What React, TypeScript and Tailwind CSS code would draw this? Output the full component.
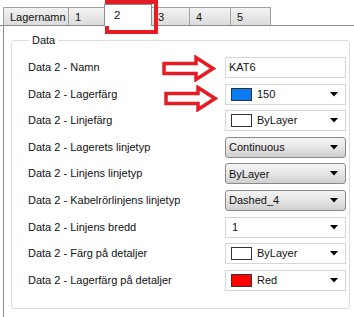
import React from "react";

const font = { fontFamily: '"Liberation Sans", Arial, sans-serif' };

function Caret() {
  return (
    <svg width="8" height="5" viewBox="0 0 8 5" className="shrink-0">
      <polygon points="0,0 8,0 4,4.5" fill="#000" />
    </svg>
  );
}

function Swatch({ color }: { color: string }) {
  return <span className="w-[21px] h-[13px] border border-[#333] shrink-0" style={{ background: color }} />;
}

function WhiteCombo({ swatch, text }: { swatch?: string; text: string }) {
  return (
    <div className="w-[121px] h-[21px] border border-[#d4d6da] bg-white flex items-center pl-[5px] pr-[7px]">
      {swatch && <Swatch color={swatch} />}
      <span className={`flex-1 text-[11px] text-[#111] ${swatch ? "pl-[5px]" : "pl-[1px]"}`}>{text}</span>
      <Caret />
    </div>
  );
}

function GrayCombo({ text }: { text: string }) {
  return (
    <div className="w-[121px] h-[21px] border border-[#8a8a8a] rounded-[3px] bg-gradient-to-b from-[#f4f4f4] via-[#e6e6e6] to-[#cfcfcf] flex items-center pl-[3px] pr-[7px]">
      <span className="flex-1 text-[11px] text-[#111]">{text}</span>
      <Caret />
    </div>
  );
}

function TextBox({ text }: { text: string }) {
  return (
    <div className="w-[121px] h-[21px] border border-[#d4d6da] bg-white flex items-center pl-[3px]">
      <span className="text-[11px] text-[#111]">{text}</span>
    </div>
  );
}

const rows: { label: string; ctrl: React.ReactNode }[] = [
  { label: "Data 2 - Namn", ctrl: <TextBox text="KAT6" /> },
  { label: "Data 2 - Lagerfärg", ctrl: <WhiteCombo swatch="#0a7cf2" text="150" /> },
  { label: "Data 2 - Linjefärg", ctrl: <WhiteCombo swatch="#ffffff" text="ByLayer" /> },
  { label: "Data 2 - Lagerets linjetyp", ctrl: <GrayCombo text="Continuous" /> },
  { label: "Data 2 - Linjens linjetyp", ctrl: <GrayCombo text="ByLayer" /> },
  { label: "Data 2 - Kabelrörlinjens linjetyp", ctrl: <GrayCombo text="Dashed_4" /> },
  { label: "Data 2 - Linjens bredd", ctrl: <WhiteCombo text="1" /> },
  { label: "Data 2 - Färg på detaljer", ctrl: <WhiteCombo swatch="#ffffff" text="ByLayer" /> },
  { label: "Data 2 - Lagerfärg på detaljer", ctrl: <WhiteCombo swatch="#ff0000" text="Red" /> },
];

function Tab({ label, w }: { label: string; w: string }) {
  return (
    <div className={`${w} h-[18px] border border-b-0 border-[#a0a0a0] bg-gradient-to-b from-[#f3f3f3] to-[#dcdcdc] text-[11px] text-[#111] pl-[6px] leading-[18px] -mr-px`}>
      {label}
    </div>
  );
}

function Arrow() {
  return (
    <svg width="54" height="27" viewBox="0 0 54 27">
      <polygon
        points="2,8.5 34,8.5 34,2.5 51,13.5 34,24.5 34,18.5 2,18.5"
        fill="#fff"
        stroke="#e51c23"
        strokeWidth="3.5"
        strokeLinejoin="miter"
      />
    </svg>
  );
}

export default function App() {
  return (
    <div className="relative w-[354px] h-[317px] bg-white overflow-hidden" style={font}>
      {/* tab strip */}
      <div className="h-[26px] pt-[8px] flex items-end pl-[3px] border-b border-[#898c95]">
        <Tab label="Lagernamn" w="w-[66px]" />
        <Tab label="1" w="w-[37px]" />
        <div className="w-[48px] h-[22px] bg-white border border-b-0 border-[#898c95] text-[11.5px] text-[#111] pl-[9px] pt-[2px] -mb-px -mr-px relative z-10">
          2
        </div>
        <Tab label="3" w="w-[39px]" />
        <Tab label="4" w="w-[42px]" />
        <Tab label="5" w="w-[41px]" />
      </div>
      {/* panel */}
      <div className="ml-[3px] border-l border-[#898c95] h-[291px] pt-[7px] pl-[7px] pr-[4px]">
        <fieldset className="border border-[#d5dfe5] rounded-[3px] h-[276px] pl-[16px] pr-[3px] pb-0 m-0">
          <legend className="text-[11px] text-[#111] px-[3px] ml-[1px] leading-[14px]">Data</legend>
          <div className="flex flex-col mt-[10px]">
            {rows.map((r) => (
              <div key={r.label} className="h-[26.6px] flex items-start justify-between">
                <span className="text-[11px] text-[#111] h-[21px] leading-[21px]">{r.label}</span>
                {r.ctrl}
              </div>
            ))}
          </div>
        </fieldset>
      </div>
      {/* annotations */}
      <div className="absolute left-[105px] top-0 w-[53px] h-[34px] border-[4px] border-[#e51c23]" />
      <div className="absolute left-[162px] top-[55px]">
        <Arrow />
      </div>
      <div className="absolute left-[164px] top-[85px]">
        <Arrow />
      </div>
    </div>
  );
}
